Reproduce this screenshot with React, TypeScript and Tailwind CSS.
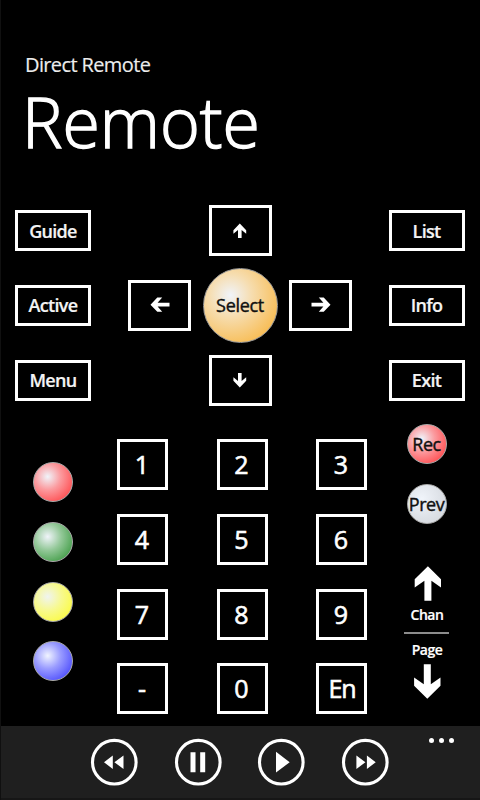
import type { ReactNode } from "react";

const font = { fontFamily: '"Open Sans", "Noto Sans", sans-serif' };

type LabelProps = { children: ReactNode; className?: string };

function BoxButton({ children, className = "" }: LabelProps) {
  return (
    <button className={`flex items-center justify-center border-[3px] border-white ${className}`}>
      {children}
    </button>
  );
}

function SideButton({ children }: LabelProps) {
  return (
    <BoxButton className="h-[41px] w-[76px] text-[18px] leading-none font-semibold text-[#f4f4f4]">
      <span className="tracking-[-0.7px] [-webkit-text-stroke:0.2px]">{children}</span>
    </BoxButton>
  );
}

function Arrow({ d, width, height }: { d: string; width: number; height: number }) {
  return (
    <svg width={width} height={height} viewBox={`0 0 ${width} ${height}`} fill="white">
      <path d={d} />
    </svg>
  );
}

function Ball({ className, children }: { className: string; children?: ReactNode }) {
  return (
    <button
      className={`flex size-10 shrink-0 items-center justify-center rounded-full border border-[#aaa] text-[18px] leading-none tracking-[-0.5px] text-[#101010] [-webkit-text-stroke:0.4px] ${className}`}
    >
      {children}
    </button>
  );
}

function MediaButton({ d }: { d: string }) {
  return (
    <button className="size-12">
      <svg width="48" height="48" viewBox="0 0 48 48" fill="white">
        <circle cx="24.3" cy="24.2" r="21.8" fill="none" stroke="white" strokeWidth="3.1" />
        <path d={d} />
      </svg>
    </button>
  );
}

const keys = ["1", "2", "3", "4", "5", "6", "7", "8", "9", "-", "0", "En"];

export default function App() {
  return (
    <div
      className="flex h-[800px] w-[480px] flex-col overflow-hidden border-l border-[#101010] bg-black text-white"
      style={font}
    >
      <header className="h-[205px] pt-[51px] pl-[24px]">
        <p className="h-7 text-[20px] leading-7 tracking-[-0.62px] whitespace-nowrap text-[#ededed] [-webkit-text-stroke:0.15px]">
          Direct Remote
        </p>
        <h1 className="mt-[6.5px] ml-[-3px] w-max origin-left scale-x-[0.972] text-[70px] leading-[70px] font-light whitespace-nowrap [-webkit-text-stroke:1.4px]">
          Remote
        </h1>
      </header>

      <section className="flex h-[219px] pl-[14px]">
        <div className="flex flex-col gap-[33.75px] pt-[5px]">
          <SideButton>Guide</SideButton>
          <SideButton>Active</SideButton>
          <SideButton>Menu</SideButton>
        </div>
        <div className="ml-[37px] grid h-[200.5px] grid-cols-[63px_98px_63px] grid-rows-[51px_98.5px_51px] place-items-center">
          <BoxButton className="col-start-2 h-[51px] w-[63px]">
            <Arrow width={14} height={16} d="M6.8 .5 L13.2 7.2 V10.8 L8.6 7 V15 H5 V7 L.4 10.8 V7.2Z" />
          </BoxButton>
          <BoxButton className="col-start-1 h-[51px] w-[63px]">
            <Arrow width={20} height={16} d="M.5 7.7 L7.3 .6 H12.2 L7.6 5.8 H19.5 V9.6 H7.6 L12.2 14.8 H7.3Z" />
          </BoxButton>
          <button className="flex size-[75px] items-center justify-center rounded-full border border-[#999] bg-[radial-gradient(circle_at_36%_36%,#f0f4fa_0%,#f6ddb0_32%,#f8bd55_78%,#f9b84a_100%)] text-[18px] leading-none text-[#101010] [-webkit-text-stroke:0.4px]">
            <span className="tracking-[-0.3px]">Select</span>
          </button>
          <BoxButton className="h-[51px] w-[63px]">
            <Arrow width={20} height={16} d="M19.5 7.7 L12.7 .6 H7.8 L12.4 5.8 H.5 V9.6 H12.4 L7.8 14.8 H12.7Z" />
          </BoxButton>
          <BoxButton className="col-start-2 h-[51px] w-[63px]">
            <Arrow width={14} height={16} d="M6.8 15.5 L13.2 8.8 V5.2 L8.6 9 V1 H5 V9 L.4 5.2 V8.8Z" />
          </BoxButton>
        </div>
        <div className="ml-[36.5px] flex flex-col gap-[33.75px] pt-[5px]">
          <SideButton>List</SideButton>
          <SideButton>Info</SideButton>
          <SideButton>Exit</SideButton>
        </div>
      </section>

      <section className="flex h-[302px] pl-[32px]">
        <div className="flex flex-col gap-[19.8px] pt-[38px]">
          <Ball className="bg-[radial-gradient(circle_at_36%_36%,#f0f4fa_0%,#fb9b9f_38%,#ff4d50_82%)]" />
          <Ball className="bg-[radial-gradient(circle_at_36%_36%,#f0f4fa_0%,#93c898_40%,#3e9b43_85%)]" />
          <Ball className="bg-[radial-gradient(circle_at_36%_36%,#f0f4f0_0%,#f7f991_40%,#fbfb3d_85%)]" />
          <Ball className="bg-[radial-gradient(circle_at_36%_36%,#f0f4ff_0%,#9a9cff_38%,#4848fc_85%)]" />
        </div>
        <div className="ml-[44px] grid h-[276px] grid-cols-[51px_51px_51px] grid-rows-[51px_51px_51px_51px] gap-x-[48.5px] gap-y-[23.8px] pt-[15px]">
          {keys.map((key) => (
            <BoxButton key={key} className="size-[51px] text-[25px] leading-none [-webkit-text-stroke:0.6px]">
              <span className={key === "En" ? "pl-px tracking-[-1.2px]" : "pr-px"}>{key}</span>
            </BoxButton>
          ))}
        </div>
        <div className="ml-[36.5px] flex w-[46px] flex-col items-center">
          <Ball className="bg-[radial-gradient(circle_at_36%_36%,#f0f4fa_0%,#fb9b9f_38%,#ff4d50_82%)]">Rec</Ball>
          <Ball className="mt-5 bg-[radial-gradient(circle_at_36%_36%,#f0f4fa_0%,#dce0e6_60%,#d2d5d8_100%)]">Prev</Ball>
          <button className="mt-[42px] flex flex-col items-center">
            <Arrow width={28} height={35} d="M14.9 .3 L28 13.3 V21.5 L18.4 14.8 V34.7 H11.4 V14.8 L1.7 21.5 V13.3Z" />
            <span className="mt-[4px] pl-px text-[14px] leading-5 font-semibold tracking-[-0.4px] [-webkit-text-stroke:0.2px]">
              Chan
            </span>
          </button>
          <div className="mt-[7px] h-[2px] w-[45px] bg-[#8c8c8c]" />
          <button className="mt-[6px] flex flex-col items-center">
            <span className="pl-px text-[14px] leading-5 font-semibold tracking-[-0.5px] [-webkit-text-stroke:0.2px]">
              Page
            </span>
            <span className="mt-[4px] pl-px">
              <Arrow width={28} height={35} d="M14.3 34.7 L27.5 21.7 V13.5 L17.8 20.2 V.3 H10.8 V20.2 L1.1 13.5 V21.7Z" />
            </span>
          </button>
        </div>
      </section>

      <footer className="flex h-[74px] items-start border-b-2 border-[#161616] bg-[#1f1f1f] pt-[12px] pl-[89px]">
        <div className="flex gap-[35.5px]">
          <MediaButton d="M22.8 17.5 V31 L14 24.3Z M33.5 17.5 V31 L24.4 24.3Z" />
          <MediaButton d="M16.5 14.2 H21.5 V34.2 H16.5Z M26.2 14.2 H31.2 V34.2 H26.2Z" />
          <MediaButton d="M19 13.8 L32.7 24.2 L19 34.6Z" />
          <MediaButton d="M15.4 17.5 V31 L24.4 24.3Z M25.9 17.5 V31 L34.7 24.3Z" />
        </div>
        <button className="ml-[40.5px] flex gap-[5px]">
          <span className="size-[5px] rounded-full bg-white" />
          <span className="size-[5px] rounded-full bg-white" />
          <span className="size-[5px] rounded-full bg-white" />
        </button>
      </footer>
    </div>
  );
}
